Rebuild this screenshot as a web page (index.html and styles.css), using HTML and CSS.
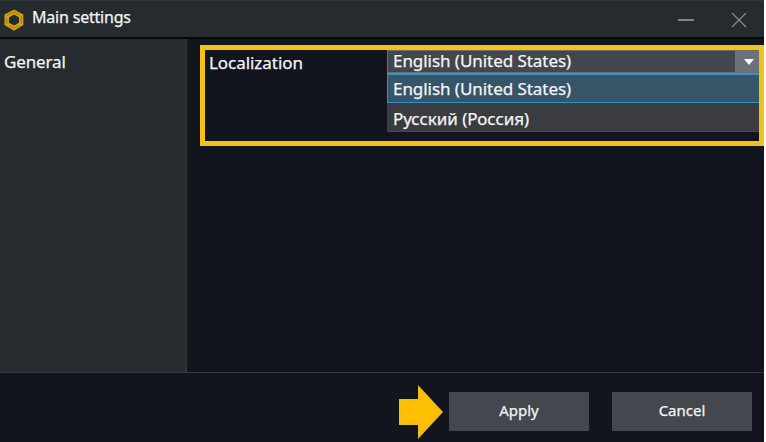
FILE: index.html
```html
<!DOCTYPE html>
<html lang="en">
<head>
    <meta charset="UTF-8">
    <meta name="viewport" content="width=device-width, initial-scale=1.0">
    <title>Main settings</title>
    <link rel="stylesheet" href="styles.css">
</head>
<body>
    <div class="window">
        <header class="titlebar">
            <svg class="logo" width="20" height="22" viewBox="0 0 20 22">
                <path d="M10 0.5 19.3 5.5V16L10 21.7 0.5 16V5.5ZM10 5.6 5 8.4V13.8L10 16.6 15 13.8V8.4Z" fill="#d5a20c" fill-rule="evenodd"/>
                <path d="M2.5 6.8 10 2.8 15 5.5M17.3 6.8V14.8M15 16.6 10 19.3 5 16.6M2.7 14.8V9" fill="none" stroke="#8b6c13" stroke-width="0.8"/>
            </svg>
            <h1 class="title">Main settings</h1>
            <button class="window-btn" aria-label="Minimize">
                <svg width="16" height="16" viewBox="0 0 16 16"><path d="M0 7H16" stroke="#7b8889" stroke-width="2"/></svg>
            </button>
            <button class="window-btn close" aria-label="Close">
                <svg width="16" height="16" viewBox="0 0 16 16"><path d="M1 0 15 14M15 0 1 14" stroke="#87908f" stroke-width="1.2"/></svg>
            </button>
        </header>
        <div class="main">
            <nav class="sidebar">
                <a class="nav-item">General</a>
            </nav>
            <section class="content">
                <div class="setting">
                    <label class="label">Localization</label>
                    <div class="dropdown">
                        <div class="selected">
                            <span class="value">English (United States)</span>
                            <span class="toggle"><svg width="10" height="6" viewBox="0 0 10 6"><path d="M0 0H10L5 6Z" fill="#fff"/></svg></span>
                        </div>
                        <div class="option active">English (United States)</div>
                        <div class="option">Русский (Россия)</div>
                    </div>
                </div>
            </section>
        </div>
        <footer class="footer">
            <svg class="arrow" width="44" height="54" viewBox="0 0 44 54">
                <path d="M0 14H19V0L44 27 19 54V40H0Z" fill="#f3be12"/>
                <path d="M3 17H22V8L40 27 22 46V37H3Z" fill="#ffc000"/>
            </svg>
            <button class="btn">Apply</button>
            <button class="btn">Cancel</button>
        </footer>
    </div>
</body>
</html>
```

FILE: styles.css
```css
* {
    box-sizing: border-box;
}
body {
    margin: 0;
    background: #fff;
    font-family: "Noto Sans", "Open Sans", sans-serif;
    font-size: 17px;
    letter-spacing: -0.05px;
    color: #f4f5f5;
    -webkit-text-stroke: 0.25px #f4f5f5;
    overflow: hidden;
}
button {
    font-family: inherit;
    border: none;
    padding: 0;
}
.window {
    width: 764px;
    height: 442px;
    display: flex;
    flex-direction: column;
    background: #12151d;
}
.titlebar {
    height: 39px;
    flex: none;
    display: flex;
    align-items: center;
    padding: 0 17px 0 4px;
    background: #252b2e;
    border-top: 1px solid #303639;
    border-bottom: 2px solid #07090b;
}
.logo {
    margin-top: 1px;
}
.title {
    flex: 1;
    margin: 0 0 4px 8px;
    font-size: 16px;
    font-weight: 400;
    line-height: 24px;
    letter-spacing: -0.2px;
}
.window-btn {
    width: 16px;
    height: 16px;
    margin-top: 3px;
    background: none;
}
.window-btn svg {
    display: block;
}
.window-btn.close {
    margin-left: 37px;
}
.main {
    height: 333px;
    flex: none;
    display: flex;
}
.sidebar {
    width: 187px;
    background: #252b2e;
    border-right: 2px solid #303235;
    padding: 11px 4px;
}
.nav-item {
    display: block;
    line-height: 24px;
    letter-spacing: -0.15px;
}
.content {
    flex: 1;
    padding: 6px 0 0 13px;
}
.setting {
    height: 101px;
    display: flex;
    border: 5px solid #f5c116;
}
.label {
    width: 182px;
    padding: 1px 0 0 4px;
    line-height: 24px;
}
.dropdown {
    flex: 1;
    white-space: nowrap;
}
.selected {
    height: 23px;
    display: flex;
    background: #43464d;
    border: 1px solid #6b6e72;
    border-right: none;
}
.value {
    flex: 1;
    padding-left: 5px;
    line-height: 20px;
}
.toggle {
    width: 24px;
    display: flex;
    align-items: center;
    justify-content: center;
    background: #6c727b;
    padding-left: 3px;
}
.option {
    height: 29px;
    padding-left: 6px;
    line-height: 31px;
    background: #3b3c41;
    border-bottom: 1px solid #47494c;
}
.option.active {
    height: 30px;
    padding-left: 5px;
    line-height: 27px;
    background: #365568;
    border: 1px solid #2f94cb;
    border-top-width: 2px;
    border-right: none;
}
.footer {
    flex: 1;
    display: flex;
    align-items: center;
    justify-content: flex-end;
    padding: 8px 12px 0 0;
    border-top: 1px solid #35373a;
}
.arrow {
    margin-right: 6px;
}
.btn {
    width: 140px;
    height: 39px;
    padding-bottom: 3px;
    background: #43474e;
    color: #f4f5f5;
    font-size: 15px;
}
.btn + .btn {
    margin-left: 23px;
}
```
